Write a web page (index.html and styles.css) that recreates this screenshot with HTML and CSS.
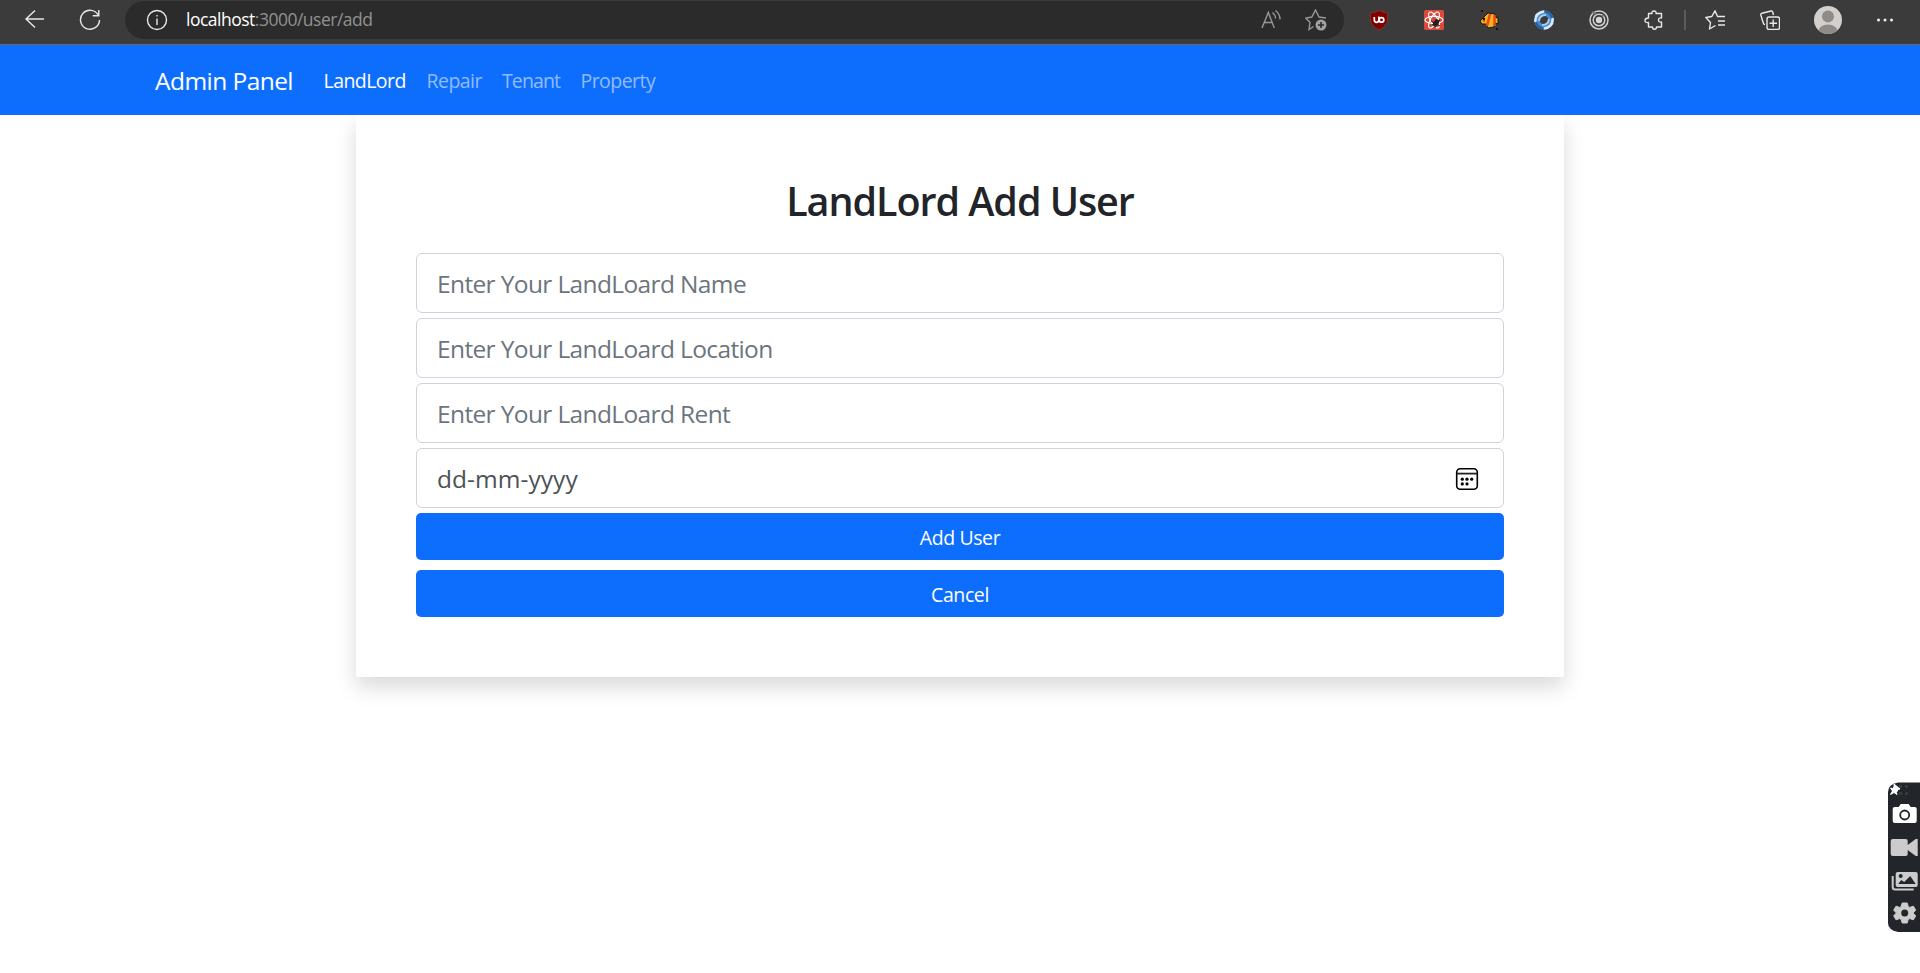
FILE: index.html
```html
<!DOCTYPE html>
<html lang="en">
<head>
<meta charset="utf-8">
<title>Admin Panel</title>
<link rel="stylesheet" href="styles.css">
</head>
<body>
<header class="browser">
  <svg class="ic back" viewBox="0 0 22 22"><path d="M20 11H2M11 2.500L2 11l9 8.500"/></svg>
  <svg class="ic reload" viewBox="0 0 22 22"><path d="M19.500 6.500A9.500 9.500 0 1 0 20.500 11M19.800 1v5.800h-6"/></svg>
  <div class="address">
    <svg class="ic info" viewBox="0 0 22 22"><circle cx="11" cy="11" r="9.500"/><path d="M11 9.500v6.500M11 6v1.500"/></svg>
    <span class="url"><b>localhost</b><span>:3000/user/add</span></span>
    <svg class="ic read" viewBox="0 0 22 22"><path d="M2 19L8.300 3.500 14.300 19M4.300 13.500h8M12.500 3.500q3 2.500 3 6M15.500 1.500q4.500 3.500 4.500 9"/></svg>
    <svg class="ic fav" viewBox="0 0 22 22"><path d="M8.500 17.500L4 20.500l1-7L.8 9l6-1L10.500 1l3.500 7 7 1"/><circle class="fill" cx="16" cy="16" r="5.500"/><path class="cut" d="M16 13v6M13 16h6"/></svg>
  </div>
  <div class="tools">
    <svg viewBox="0 0 20 20"><path fill="#800000" stroke="#a33" stroke-width=".6" d="M10 .5Q14 3 18.500 3v6.500Q18 16 10 19.700 2 16 1.500 9.500V3Q6 3 10 .5z"/><path fill="none" stroke="#fff" stroke-width="1.700" d="M5.300 7v3q0 2.300 2.300 2.300t2.300-2.300V6.500"/><circle cx="12.500" cy="9.900" r="2.300" fill="none" stroke="#fff" stroke-width="1.700"/></svg>
    <svg viewBox="0 0 20 20"><rect width="20" height="20" rx="1.500" fill="#d84a3b"/><g fill="none" stroke="#fff" stroke-width="1.100"><ellipse cx="10" cy="10" rx="9" ry="3.600"/><ellipse cx="10" cy="10" rx="9" ry="3.600" transform="rotate(60 10 10)"/><ellipse cx="10" cy="10" rx="9" ry="3.600" transform="rotate(120 10 10)"/></g><ellipse cx="12" cy="13" rx="2.500" ry="4" transform="rotate(35 12 13)" fill="#222"/><path stroke="#222" d="M7 11l9 5M8 15l8-5M11 18l1-9"/></svg>
    <svg viewBox="0 0 20 20"><path fill="#f5b21a" stroke="#161616" d="M1 11l4-4 4-4 7 1 1 4 2-1v7l-3-1-1 4-6 1-2-4-4 0z"/><path stroke="#e64a19" stroke-width="2.500" d="M11 4l-3 12M15.500 5v11"/><path fill="#e64a19" d="M3 11l3-4v5z"/><path fill="#111" d="M4 8h2v2H4zM2 0h2v2H2zM17 18h2v2h-2z"/></svg>
    <svg viewBox="0 0 20 20"><circle cx="10" cy="10" r="7" fill="none" stroke="#4d8bc9" stroke-width="5.500"/><path fill="none" stroke="#d9eafa" stroke-width="2.500" d="M1.500 12Q.500 3 10 1.500M18.500 8Q19.500 17 10 18.500"/><path fill="none" stroke="#1f5fa8" stroke-width="2" d="M11 1.500Q17 3 18 8M9 18.500Q3 17 2 12"/><path fill="none" stroke="#a9cdf0" stroke-width="2" d="M5 11Q5.500 5 12 5M15 9Q14.500 15 8 15"/></svg>
    <svg viewBox="0 0 20 20"><g fill="none" stroke="#cfcfcf" stroke-width="1.500"><circle cx="10" cy="10" r="9"/><circle cx="10" cy="10" r="5.800"/></g><circle cx="10" cy="10" r="3.200" fill="#d6d6d6"/><path stroke="#777" stroke-width="2" d="M3 2l4 2M13 5l2 1"/></svg>
    <svg class="line" viewBox="0 0 20 20"><path d="M4.500 3.500H8Q7.500 1 10 1t2 2.500h5.500v4.500Q14.500 7.500 14.500 10t3 2v5H12.500Q12.500 19.300 10.500 19.300T8.500 17h-4v-4.500Q1 13 1 10.500T4.500 8z"/></svg>
  </div>
  <i class="divider"></i>
  <div class="tools tools-right">
    <svg class="line" viewBox="0 0 20 20"><path d="M10.500 15.500L4.500 19l1-6.500L.8 7.500l6-1L10 .8l2.500 5.700H20M13 11h7M13 15h7"/></svg>
    <svg class="line" viewBox="0 0 20 20"><rect x="7" y="7" width="12.500" height="12.500" rx="2"/><path d="M13.200 9.500v7.500M9.500 13.200H17M13.500 5L12.700 2Q12.300.7 11 1L2 3.300Q.500 3.700.8 5l2.500 8q.400 1.500 1.700 1.600"/></svg>
    <svg class="avatar" viewBox="0 0 28 28"><defs><clipPath id="disc"><circle cx="14" cy="14" r="14"/></clipPath></defs><g clip-path="url(#disc)"><path fill="#d2d0ce" d="M0 0h28v28H0z"/><circle cx="14" cy="10.500" r="6" fill="#8f8b88"/><ellipse cx="14" cy="26" rx="10" ry="7.500" fill="#8f8b88"/></g></svg>
    <svg class="dots" viewBox="0 0 20 20"><circle cx="3.500" cy="10" r="1.500"/><circle cx="10" cy="10" r="1.500"/><circle cx="16.500" cy="10" r="1.500"/></svg>
  </div>
</header>
<nav class="navbar">
  <a class="brand">Admin Panel</a>
  <a class="link active">LandLord</a>
  <a class="link repair">Repair</a>
  <a class="link tenant">Tenant</a>
  <a class="link">Property</a>
</nav>
<main class="card">
  <h1 class="title">LandLord Add User</h1>
  <form class="form">
    <input class="field" type="text" placeholder="Enter Your LandLoard Name">
    <input class="field" type="text" placeholder="Enter Your LandLoard Location">
    <input class="field" type="text" placeholder="Enter Your LandLoard Rent">
    <div class="field date"><span>dd-mm-yyyy</span>
      <svg viewBox="0 0 24 24"><rect x="1.700" y="1.700" width="20.600" height="20.600" rx="3.500" fill="none" stroke="#000" stroke-width="1.600"/><path d="M2 6.600h20" stroke="#222" stroke-width="1.800"/><circle cx="7.300" cy="12.200" r="1.600"/><circle cx="12" cy="12.200" r="1.600"/><circle cx="16.700" cy="12.200" r="1.600"/><circle cx="7.300" cy="16.900" r="1.600"/><circle cx="12" cy="16.900" r="1.600"/></svg>
    </div>
    <button class="btn" type="button">Add User</button>
    <button class="btn" type="button">Cancel</button>
  </form>
</main>
<aside class="capture">
  <svg viewBox="0 0 32 150">
    <path fill="#22262b" d="M10 .5H32V150H10Q0 148 0 141V10Q0 2 10 .5z"/>
    <path fill="#373b40" d="M11 3h3v3h-3zM17 3h3v3h-3zM11 10h3v3h-3zM17 10h3v3h-3z"/>
    <path fill="#fff" stroke="#fff" d="M6 2l6 5-2 .5-1.500 3 .5 2-3-2-3.500 2 2-3.500-2-3 2 .500L6 5z"/>
    <g transform="translate(.7 0)">
      <path fill="#fff" d="M6 25h4l2-3h8l2 3h4q2 0 2 2v12q0 2-2 2H6q-2 0-2-2V27q0-2 2-2z"/>
      <circle cx="16" cy="33" r="4.500" fill="#fff" stroke="#22262b" stroke-width="1.800"/>
      <path fill="#ccc" d="M4 57h13q2 0 2 2v4l8-6h2v17h-2l-8-6v4q0 2-2 2H4q-2 0-2-2V59q0-2 2-2z"/>
      <path fill="none" stroke="#ccc" stroke-width="2" d="M4 94v11q0 2.500 2.500 2.500H25"/>
      <path fill="#ccc" d="M9 90h18q2 0 2 2v11q0 2-2 2H9q-2 0-2-2V92q0-2 2-2z"/>
      <circle cx="12" cy="94" r="2" fill="#22262b"/><path fill="#22262b" d="M9.500 102l3-4 3 2 6-6 5.500 8z"/>
      <g transform="translate(16 131)"><path fill="#ccc" stroke="#ccc" stroke-linejoin="round" d="M-2.500-10h5L3.500-6.500 5-5.600l3.700-1.200 2.300 4L8.300 0 11 2.800l-2.300 4L5 5.600 3.500 6.500 2.500 10h-5L-3.500 6.500-5 5.600-8.700 6.800l-2.300-4L-8.300 0-11-2.800l2.300-4L-5-5.600l1.500-.9z"/><circle r="3.500" fill="#22262b"/></g>
    </g>
  </svg>
</aside>
</body>
</html>
```
FILE: styles.css
```css
* { box-sizing: border-box; }
body {
  margin: 0;
  height: 973px;
  overflow: hidden;
  background: #fff;
  color: #212529;
  font-family: "Open Sans", "Noto Sans", sans-serif;
}
svg { display: block; flex: none; }

/* Browser toolbar */
.browser {
  display: flex;
  align-items: flex-start;
  height: 45px;
  background: #3b3b3b;
  border-bottom: 1px solid #686868;
}
.ic { width: 22px; height: 22px; fill: none; stroke: #e8e8e8; stroke-width: 1.4; }
.back { margin: 8px 0 0 24px; }
.reload { margin: 9px 0 0 33px; }
.address {
  display: flex;
  align-items: center;
  width: 1219px;
  height: 38px;
  margin: 1px 0 0 24px;
  padding: 0 17px 0 21px;
  border-radius: 19px;
  background: #2b2b2b;
}
.url {
  flex: 1;
  margin-left: 18px;
  padding-bottom: 2px;
  color: #919191;
  font-size: 17.5px;
  letter-spacing: -0.5px;
  white-space: nowrap;
}
.url b { color: #fff; font-weight: 400; }
.read, .fav { stroke: #979797; }
.fav { margin-left: 23px; }
.fill { fill: #a0a0a0; stroke: none; }
.cut { stroke: #2b2b2b; stroke-width: 1.6; }
.tools { display: flex; align-items: center; gap: 35px; height: 40px; margin-left: 25px; }
.tools svg { width: 20px; height: 20px; }
.tools .line { fill: none; stroke: #e8e8e8; stroke-width: 1.4; stroke-linejoin: round; }
.divider { width: 2px; height: 20px; margin: 10px 0 0 20px; background: #5b5b5b; }
.tools-right { margin-left: 19px; }
.tools .avatar { width: 28px; height: 28px; margin: 0 -1px; }
.tools .dots { margin-left: -1px; fill: #eee; }

/* Site navigation */
.navbar {
  position: relative;
  z-index: 1;
  display: flex;
  align-items: center;
  height: 70px;
  padding: 1px 155px 0;
  background: #0d6efd;
}
.brand { width: 168.5px; color: #fff; font-size: 24.5px; letter-spacing: -0.55px; white-space: nowrap; }
.link { width: 103px; color: rgba(255, 255, 255, .55); font-size: 19.5px; letter-spacing: -0.55px; }
.active { color: #fff; }
.repair { width: 75.5px; }
.tenant { width: 78.5px; letter-spacing: -0.9px; }

/* Form card */
.card {
  width: 1208px;
  height: 562px;
  margin: 0 auto;
  padding: 60px;
  box-shadow: 0 10px 20px rgba(0, 0, 0, .15);
}
.title {
  margin: 0 0 28px;
  padding-top: 2px;
  font-size: 39.5px;
  font-weight: 600;
  line-height: 48px;
  letter-spacing: -1.05px;
  text-align: center;
}
.form { display: flex; flex-direction: column; }
.field {
  width: 100%;
  height: 60px;
  margin-bottom: 5px;
  padding: 0 20px;
  border: 1px solid #ced4da;
  border-radius: 6px;
  background: #fff;
  color: #4e5256;
  font-family: inherit;
  font-size: 24.5px;
  letter-spacing: -0.63px;
}
.field::placeholder { color: #6c757d; opacity: 1; }
.date {
  display: flex;
  align-items: center;
  justify-content: space-between;
  padding-right: 24px;
  letter-spacing: 0.05px;
}
.date svg { width: 24px; height: 24px; margin-top: 1px; }
.btn {
  height: 47px;
  margin-bottom: 10px;
  padding: 2px 0 0;
  border: 0;
  border-radius: 5px;
  background: #0d6efd;
  color: #fff;
  font-family: inherit;
  font-size: 19.5px;
  letter-spacing: -0.4px;
}

/* Floating screen-capture strip */
.capture { position: absolute; top: 782px; right: 0; width: 32px; height: 150px; }
```
